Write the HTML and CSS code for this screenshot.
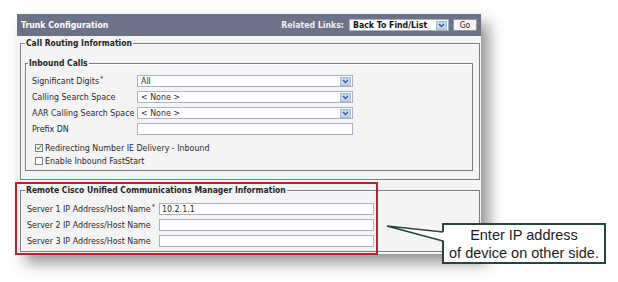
FILE: index.html
```html
<!DOCTYPE html>
<html lang="en">
<head>
  <meta charset="UTF-8">
  <title>Trunk Configuration</title>
  <link rel="stylesheet" href="styles.css">
</head>
<body>
  <div class="stage">
    <div class="panel">
      <div class="panel-head">
        <span class="title">Trunk Configuration</span>
        <div class="related">
          <span class="related-label">Related Links:</span>
          <div class="select select-links">Back To Find/List<span class="arrow"><svg width="7" height="5" viewBox="0 0 7 5"><path d="M1 1l2.5 2.5L6 1" fill="none" stroke="#3b5a8c" stroke-width="1.4"/></svg></span></div>
          <button class="go">Go</button>
        </div>
      </div>

      <div class="panel-body">
        <fieldset class="group">
          <legend>Call Routing Information</legend>
          <fieldset class="group inner">
            <legend>Inbound Calls</legend>
            <div class="rows">
              <div class="row">
                <label class="label">Significant Digits<sup>*</sup></label>
                <div class="select">All<span class="arrow"><svg width="7" height="5" viewBox="0 0 7 5"><path d="M1 1l2.5 2.5L6 1" fill="none" stroke="#3b5a8c" stroke-width="1.4"/></svg></span></div>
              </div>
              <div class="row">
                <label class="label">Calling Search Space</label>
                <div class="select">&lt; None &gt;<span class="arrow"><svg width="7" height="5" viewBox="0 0 7 5"><path d="M1 1l2.5 2.5L6 1" fill="none" stroke="#3b5a8c" stroke-width="1.4"/></svg></span></div>
              </div>
              <div class="row">
                <label class="label">AAR Calling Search Space</label>
                <div class="select">&lt; None &gt;<span class="arrow"><svg width="7" height="5" viewBox="0 0 7 5"><path d="M1 1l2.5 2.5L6 1" fill="none" stroke="#3b5a8c" stroke-width="1.4"/></svg></span></div>
              </div>
              <div class="row">
                <label class="label">Prefix DN</label>
                <div class="field"></div>
              </div>
              <div class="check-row first">
                <span class="check"><svg width="7" height="7" viewBox="0 0 7 7"><path d="M1 3.5l1.8 2L6 1.2" fill="none" stroke="#2f9a3a" stroke-width="1.3"/></svg></span>
                Redirecting Number IE Delivery - Inbound
              </div>
              <div class="check-row">
                <span class="check"></span>
                Enable Inbound FastStart
              </div>
            </div>
          </fieldset>
        </fieldset>

        <fieldset class="group remote">
          <legend>Remote Cisco Unified Communications Manager Information</legend>
          <div class="rows">
            <div class="row">
              <label class="label">Server 1 IP Address/Host Name<sup>*</sup></label>
              <div class="field">10.2.1.1</div>
            </div>
            <div class="row">
              <label class="label">Server 2 IP Address/Host Name</label>
              <div class="field"></div>
            </div>
            <div class="row">
              <label class="label">Server 3 IP Address/Host Name</label>
              <div class="field"></div>
            </div>
          </div>
        </fieldset>
      </div>
    </div>

    <div class="highlight"></div>
    <div class="callout">Enter IP address<br>of device on other side.</div>
    <svg class="pointer" width="618" height="282" viewBox="0 0 618 282">
      <polygon points="387,226 445,232 445,241" fill="#fff"/>
      <path d="M387 226L443 232M387 226L443 241" stroke="#24463f" stroke-width="1.6" fill="none"/>
    </svg>
  </div>
</body>
</html>
```

FILE: styles.css
```css
body { margin: 0; background: #fff; font-family: "DejaVu Sans Condensed", "DejaVu Sans", sans-serif; font-stretch: condensed; font-size: 8.8px; color: #2a2a2a; }
.stage { position: relative; width: 618px; height: 282px; padding: 14px 0 0 17px; box-sizing: border-box; }

.panel { width: 464px; background: #f4f4f4; box-shadow: 8px 9px 14px rgba(0,0,0,0.42); }
.panel-head { height: 22px; background: #6c7388; display: flex; align-items: center; justify-content: space-between; padding: 0 4px; }
.title { color: #fff; font-weight: bold; font-size: 8.7px; }
.related { display: flex; align-items: center; }
.related-label { color: #eef0f4; font-weight: bold; font-size: 8.7px; margin-right: 5px; }
.go { width: 24px; height: 12px; margin-left: 4px; padding: 0; background: #f6f6f6; border: 1px solid #9a9a9a; font: inherit; font-size: 8.5px; color: #222; line-height: 10px; }

.select, .field { box-sizing: border-box; height: 12px; background: #fff; border: 1px solid #a9b3c2; line-height: 10px; padding-left: 3px; position: relative; }
.select { width: 216px; }
.select-links { width: 100px; font-weight: bold; font-size: 8.7px; color: #111; padding-left: 3px; }
.arrow { position: absolute; right: 1px; top: 0.5px; width: 11px; height: 9px; background: #c5d4ef; border: 1px solid #a9bbdc; box-sizing: border-box; display: flex; align-items: center; justify-content: center; }
.field { width: 216px; padding-left: 2px; }

.panel-body { padding: 2px 1px 2px 3px; }
.group { margin: 0; padding: 0; border: 1px solid #7e7e7e; box-shadow: inset 1px 1px 0 #fff; }
.group legend { padding: 0 1px; margin-left: 4px; font-weight: bold; font-size: 8.5px; line-height: 10px; color: #1e1e1e; }
.group > .inner { margin: 10px 6px 8px 4px; }
.inner legend { margin-left: 2px; }

.rows { padding: 5px 0 3px 6px; }
.row { display: flex; align-items: center; height: 16px; }
.label { width: 105px; flex: none; }
.label sup { font-size: 7px; line-height: 0; vertical-align: 3px; margin-left: 1px; }
.check-row { display: flex; align-items: center; height: 13px; padding-left: 3px; }
.check-row.first { margin-top: 4px; }
.check { width: 8px; height: 8px; box-sizing: border-box; border: 1px solid #7d7d7d; background: #fff; margin-right: 2px; display: flex; align-items: center; justify-content: center; }

.remote { margin-top: 5px; }
.remote .rows { padding: 6px 0 2px 6px; }
.remote .label { width: 132px; }
.remote .field { width: 215px; }

.highlight { position: absolute; left: 15px; top: 182px; width: 363px; height: 73px; box-sizing: border-box; border: 2px solid #b3252c; }
.callout { position: absolute; left: 442px; top: 223px; width: 164px; height: 41px; box-sizing: border-box; border: 2px solid #24463f; background: #fff; font-family: "Liberation Sans", Arial, sans-serif; font-stretch: normal; font-size: 14.5px; line-height: 18px; text-align: center; color: #1c1c1c; padding-top: 1px; }
.pointer { position: absolute; left: 0; top: 0; pointer-events: none; }
```
